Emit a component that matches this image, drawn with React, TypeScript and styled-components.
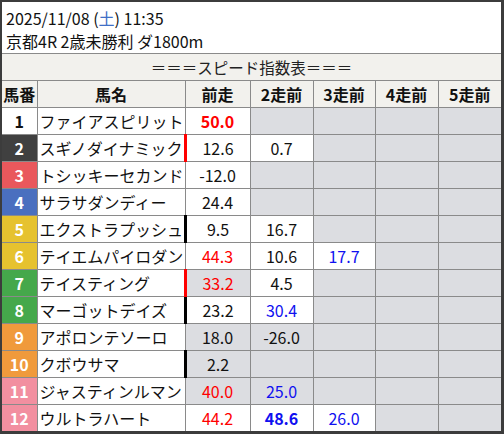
import React from "react";
import styled, { createGlobalStyle } from "styled-components";

type Cell = { v?: string; color?: string; bold?: boolean; gray?: boolean; mark?: string };
type Horse = { no: number; name: string; cells: Cell[] };

const RED = "#ff0000";
const BLUE = "#1010f0";

const frameColors: Record<number, { bg: string; fg: string }> = {
	1: { bg: "#ffffff", fg: "#111111" },
	2: { bg: "#404040", fg: "#ffffff" },
	3: { bg: "#e9585c", fg: "#ffffff" },
	4: { bg: "#4a6fbf", fg: "#ffffff" },
	5: { bg: "#e6c22f", fg: "#ffffff" },
	6: { bg: "#e6c22f", fg: "#ffffff" },
	7: { bg: "#45a84b", fg: "#ffffff" },
	8: { bg: "#45a84b", fg: "#ffffff" },
	9: { bg: "#f09a3c", fg: "#ffffff" },
	10: { bg: "#f09a3c", fg: "#ffffff" },
	11: { bg: "#f28fa0", fg: "#ffffff" },
	12: { bg: "#f28fa0", fg: "#ffffff" },
};

const E: Cell = { gray: true };

const horses: Horse[] = [
	{ no: 1, name: "ファイアスピリット", cells: [{ v: "50.0", color: RED, bold: true }, E, E, E, E] },
	{ no: 2, name: "スギノダイナミック", cells: [{ v: "12.6", mark: RED }, { v: "0.7" }, E, E, E] },
	{ no: 3, name: "トシッキーセカンド", cells: [{ v: "-12.0" }, E, E, E, E] },
	{ no: 4, name: "サラサダンディー", cells: [{ v: "24.4" }, E, E, E, E] },
	{ no: 5, name: "エクストラプッシュ", cells: [{ v: "9.5", mark: "#000" }, { v: "16.7" }, E, E, E] },
	{ no: 6, name: "テイエムパイロダン", cells: [{ v: "44.3", color: RED }, { v: "10.6" }, { v: "17.7", color: BLUE }, E, E] },
	{ no: 7, name: "テイスティング", cells: [{ v: "33.2", color: RED, gray: true, mark: RED }, { v: "4.5" }, E, E, E] },
	{ no: 8, name: "マーゴットデイズ", cells: [{ v: "23.2", mark: "#000" }, { v: "30.4", color: BLUE }, E, E, E] },
	{ no: 9, name: "アポロンテソーロ", cells: [{ v: "18.0", gray: true }, { v: "-26.0", gray: true }, E, E, E] },
	{ no: 10, name: "クボウサマ", cells: [{ v: "2.2", gray: true, mark: "#000" }, E, E, E, E] },
	{ no: 11, name: "ジャスティンルマン", cells: [{ v: "40.0", color: RED, gray: true }, { v: "25.0", color: BLUE, gray: true }, E, E, E] },
	{ no: 12, name: "ウルトラハート", cells: [{ v: "44.2", color: RED }, { v: "48.6", color: BLUE, bold: true }, { v: "26.0", color: BLUE }, E, E] },
];

const heads = ["馬番", "馬名", "前走", "2走前", "3走前", "4走前", "5走前"];
const widths = [35, 148, 65, 63, 62, 63, 63];

const App = () => {
	return (
		<>
			<GlobalStyle />
			<Frame>
				<Info>
					<div>
						2025/11/08 (<Sat>土</Sat>) 11:35
					</div>
					<div>京都4R 2歳未勝利 ダ1800m</div>
				</Info>
				<Title>＝＝＝スピード指数表＝＝＝</Title>
				<Table>
					<colgroup>
						{widths.map((w, i) => (
							<col key={i} style={{ width: w }} />
						))}
					</colgroup>
					<thead>
						<tr>
							{heads.map((h) => (
								<Th key={h}>{h}</Th>
							))}
						</tr>
					</thead>
					<tbody>
						{horses.map((h) => (
							<Row key={h.no}>
								<No $bg={frameColors[h.no].bg} $fg={frameColors[h.no].fg}>
									{h.no}
								</No>
								<Name>{h.name}</Name>
								{h.cells.map((c, i) => (
									<Val key={i} $gray={!!c.gray} $color={c.color} $bold={!!c.bold} $mark={c.mark}>
										{c.v}
									</Val>
								))}
							</Row>
						))}
					</tbody>
				</Table>
			</Frame>
		</>
	);
};

export default App;

const GlobalStyle = createGlobalStyle`
	body {
		margin: 0;
		background: #ffffff;
		font-family: "Noto Sans CJK JP", "Noto Sans", sans-serif;
	}
`;

const Frame = styled.div`
	width: 504px;
	height: 434px;
	box-sizing: border-box;
	border-style: solid;
	border-color: #3c3c3c;
	border-width: 2px 3px 3px 2px;
	background: #ffffff;
	overflow: hidden;
`;

const Info = styled.div`
	height: 51px;
	box-sizing: border-box;
	padding: 5px 0 0 4px;
	font-size: 16px;
	line-height: 23px;
	color: #111111;
`;

const Sat = styled.span`
	color: #3f6fc6;
`;

const Title = styled.div`
	height: 26px;
	border-top: 1px solid #8a8a8a;
	border-bottom: 1px solid #8a8a8a;
	background: #f2f1ed;
	text-align: center;
	font-size: 15.5px;
	line-height: 26px;
	color: #222222;
`;

const Table = styled.table`
	width: 499px;
	table-layout: fixed;
	border-collapse: collapse;

	td,
	th {
		border: 1px solid #8a8a8a;
		padding: 0;
		overflow: hidden;
		white-space: nowrap;
	}

	tr > :first-child {
		border-left: none;
	}

	tr > :last-child {
		border-right: none;
	}

	thead th {
		border-top: none;
	}

	tbody tr:last-child td {
		border-bottom: none;
	}
`;

const Th = styled.th`
	height: 26px;
	background: #f2f1ed;
	font-size: 16px;
	font-weight: bold;
	color: #111111;
	text-align: center;
`;

const Row = styled.tr`
	height: 27px;
`;

const No = styled.td<{ $bg: string; $fg: string }>`
	background: ${(p) => p.$bg};
	color: ${(p) => p.$fg};
	font-size: 16px;
	font-weight: bold;
	text-align: center;
`;

const Name = styled.td`
	background: #ffffff;
	font-size: 16px;
	color: #111111;
	padding-left: 2px !important;
	text-align: left;
`;

const Val = styled.td<{ $gray: boolean; $color?: string; $bold: boolean; $mark?: string }>`
	background: ${(p) => (p.$gray ? "#dcdde1" : "#ffffff")};
	color: ${(p) => p.$color || "#111111"};
	font-weight: ${(p) => (p.$bold ? "bold" : "normal")};
	font-size: 16px;
	text-align: center;
	${(p) => (p.$mark ? `border-left: 3px solid ${p.$mark} !important;` : "")}
`;
